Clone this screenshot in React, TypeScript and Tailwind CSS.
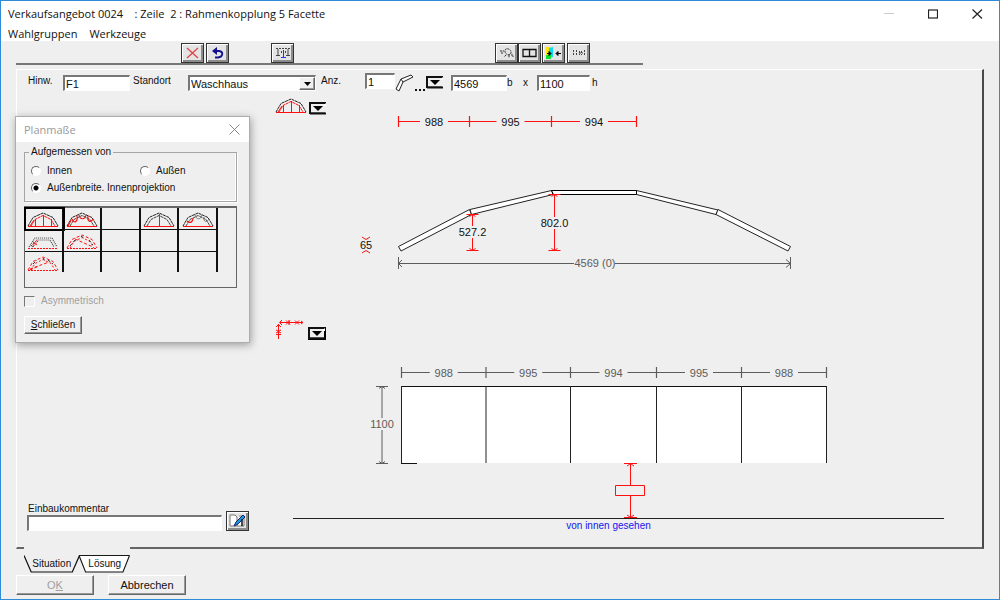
import type { ReactNode } from "react";
import { useState } from "react";

const RED = "#ff1010";
const GREY = "#5c5c5c";

function ToolButton({ label, className = "", children }: { label: string; className?: string; children: ReactNode }) {
  return (
    <button
      type="button"
      aria-label={label}
      className={`flex h-5 w-[23px] shrink-0 items-center justify-center border border-[#333] bg-[#e4e4e4] shadow-[inset_1px_1px_0_#fff,inset_-2px_-2px_0_#8c8c8c] ${className}`}
    >
      {children}
    </button>
  );
}

function MenuArrow({ label, framed = false, className = "" }: { label: string; framed?: boolean; className?: string }) {
  return (
    <button type="button" aria-label={label} className={`block shrink-0 ${className}`}>
      <svg width="18" height="13" viewBox="0 0 18 13" className="block">
        <rect x="0" y="0" width="18" height="13" fill={framed ? "#000" : "#efefef"} />
        <path d="M1 12V1H17" fill="none" stroke="#111" strokeWidth="2" />
        <rect x="2" y="2" width="14" height="8" fill="#efefef" />
        <path d="M2 10.500H16" stroke="#888" />
        <path d="M1 11.500H17" stroke="#111" strokeWidth="2" />
        <path d="M14 4L17 1V4Z" fill="#fff" />
        <path d="M4 4H14L9 9Z" fill="#000" />
      </svg>
    </button>
  );
}

type ArchKind = "bars" | "angles" | "middle" | "corner" | "flat" | "dotted" | "dottedLeft";

function Arch({ kind }: { kind: ArchKind }) {
  const dotted = kind === "dotted" || kind === "dottedLeft";
  if (kind === "flat") {
    return (
      <svg width="32" height="17" viewBox="0 0 32 17" className="block" fill="none">
        <path d="M2 13L8 4H25L30 13M5 13L10 6H23L27 13" stroke="#444" strokeDasharray="1 1" strokeWidth="1.200" />
        <path d="M1 14.500H31" stroke={RED} strokeDasharray="2 1" />
        <path d="M4 12L10 6M6 13L11 7M6 8L10 11" stroke={RED} strokeDasharray="2 1" />
      </svg>
    );
  }
  return (
    <svg width="32" height="17" viewBox="0 0 32 17" className="block" fill="none">
      <path
        d="M1 14L6 5.500L16 1L26 5.500L31 14"
        stroke={dotted ? RED : "#222"}
        strokeDasharray={dotted ? "3 2" : "3 0.6"}
      />
      <path
        d="M4 14L8 7.500L16 3.500L24 7.500L28 14"
        stroke={kind === "bars" ? RED : dotted ? RED : "#444"}
        strokeDasharray={dotted ? "2 2" : "3 0.6"}
      />
      <path d="M1 14.500H31" stroke={RED} strokeDasharray={dotted ? "2 1" : undefined} />
      {kind === "bars" && <path d="M8.500 14V7M16.500 14V3M24.500 14V7M3 14L7 8" stroke={RED} />}
      {kind === "middle" && <path d="M16.500 14V2" stroke={RED} />}
      {kind === "angles" && <path d="M6 7C8 12 12 10 11 4M13 3C14 8 19 8 20 3M22 4C21 10 25 11 27 7M2 14L5 8" stroke={RED} strokeWidth="1.200" />}
      {kind === "corner" && (
        <>
          <path d="M5 9C8 12 11 10 11 6" stroke={RED} strokeWidth="1.200" />
          <path d="M13 3C14 8 19 8 20 3M22 5C21 10 25 11 27 7" stroke="#777" />
        </>
      )}
      {kind === "dotted" && (
        <>
          <path d="M9 5L27 13" stroke={RED} strokeDasharray="3 2" />
          <path d="M4 12L9 6M15 2L19 5M23 6L27 11" stroke="#333" strokeDasharray="3 2" />
        </>
      )}
      {kind === "dottedLeft" && (
        <>
          <path d="M3 13L22 6M3 14L12 10" stroke={RED} strokeDasharray="3 2" />
          <path d="M6 8L10 4M16 2L18 5M21 4L26 8" stroke="#333" strokeDasharray="3 2" />
        </>
      )}
    </svg>
  );
}

function Chain({ xs, y, labels, color, textColor }: { xs: number[]; y: number; labels: string[]; color: string; textColor: string }) {
  return (
    <g>
      {xs.map((x) => (
        <path key={x} d={`M${x} ${y - 5.5}V${y + 5.5}`} stroke={color} strokeWidth="1.200" />
      ))}
      {labels.map((label, i) => {
        const mid = (xs[i] + xs[i + 1]) / 2;
        return (
          <g key={i}>
            <path d={`M${xs[i]} ${y}H${mid - 14}M${mid + 14} ${y}H${xs[i + 1]}`} stroke={color} />
            <text x={mid} y={y + 4} textAnchor="middle" fill={textColor}>
              {label}
            </text>
          </g>
        );
      })}
    </g>
  );
}

function Rise({ x, top, bottom, label, textY, color, textColor }: { x: number; top: number; bottom: number; label: string; textY: number; color: string; textColor: string }) {
  return (
    <g>
      <path
        d={`M${x} ${top}V${textY - 10}M${x} ${textY + 2}V${bottom}M${x - 6} ${top}H${x + 6}M${x - 6} ${bottom}H${x + 6}M${x - 3} ${top + 2}L${x} ${top}L${x + 3} ${top + 2}M${x - 3} ${bottom - 2}L${x} ${bottom}L${x + 3} ${bottom - 2}`}
        stroke={color}
        fill="none"
      />
      <text x={x} y={textY} textAnchor="middle" fill={textColor}>
        {label}
      </text>
    </g>
  );
}

function PlanView() {
  return (
    <svg viewBox="342 94 640 200" className="block h-auto min-w-0 flex-1 text-[11px]" role="img" aria-label="Grundriss">
      <Chain xs={[398.5, 469.5, 551.5, 636.5]} y={121.5} labels={["988", "995", "994"]} color={RED} textColor="#111" />
      <g fill="#fff" stroke="#222" strokeWidth="1">
        <path d="M398.500 246.500L469.500 209.500L471.500 214.500L401 251Z" />
        <path d="M470 209.500L551.500 190.500L553 194.500L471.500 214.500Z" />
        <path d="M636.500 190.500L718 210L716 214.500L636.500 194.500Z" />
        <path d="M718 209.500L790.500 246.500L788 251L716 214.500Z" />
        <path d="M551.500 190.500H636.500V194.500H553.500Z" stroke="#000" />
      </g>
      <Rise x={472.5} top={214.5} bottom={250.5} label="527.2" textY={236} color={RED} textColor="#111" />
      <Rise x={554.5} top={194.5} bottom={250.5} label="802.0" textY={227} color={RED} textColor="#111" />
      <path d="M362 237L366 239.500L370 237M362 253L366 250.500L370 253" stroke={RED} fill="none" />
      <text x="366" y="249" textAnchor="middle" fill="#111">
        65
      </text>
      <path
        d="M398.500 257V269M790.500 257V269M398.500 263.500H574M615 263.500H790.500M402 260L398.500 263.500L402 267M786 259.500L790.500 263.500L786 267.500"
        stroke={GREY}
        fill="none"
      />
      <text x="595" y="267" textAnchor="middle" fill={GREY}>
        4569 (0)
      </text>
    </svg>
  );
}

function ElevationView() {
  const xs = [401.5, 486, 570.5, 656.5, 741.5, 826.5];
  return (
    <svg viewBox="342 314 640 204" className="block h-auto min-w-0 flex-1 text-[11px]" role="img" aria-label="Ansicht">
      <Chain xs={xs} y={372.5} labels={["988", "995", "994", "995", "988"]} color={GREY} textColor={GREY} />
      <rect x="401" y="386" width="426" height="77" fill="#fff" />
      <path d="M401 386.500H827M401 463.500H417" stroke="#111" />
      {xs.map((x) => (
        <path key={x} d={`M${x} 386V463`} stroke="#222" />
      ))}
      <Rise x={382} top={386.5} bottom={463.5} label="1100" textY={428} color={GREY} textColor={GREY} />
      <path
        d="M624 463.500H637M630.500 463V485M627 466L630.500 463.500L634 466M630.500 496V518M624 517.500H637M627 515L630.500 517.500L634 515M615.500 485.500H644.500V495.500H615.500Z"
        stroke={RED}
        fill="none"
      />
    </svg>
  );
}

const fieldClass =
  "h-4 border-t-2 border-l-2 border-t-[#777] border-l-[#777] border-r border-b border-r-white border-b-white bg-white pl-px text-[11px] leading-3 text-[#111] outline-none";
const raisedClass =
  "border border-t-white border-l-white border-r-[#666] border-b-[#666] bg-[#efefef] shadow-[inset_-1px_-1px_0_#999]";

const cells: (ArchKind | null)[] = [
  "bars", "angles", null, "middle", "corner",
  "flat", "dotted", null, null, null,
  "dottedLeft", null, null, null, null,
];

function RadioOption({ label, checked, onSelect, className = "" }: { label: string; checked: boolean; onSelect: () => void; className?: string }) {
  return (
    <label className={`flex items-center gap-1.5 ${className}`}>
      <input
        type="radio"
        name="aufmass"
        checked={checked}
        onChange={onSelect}
        className="size-2.5 appearance-none rounded-full border border-t-[#666] border-l-[#666] border-r-white border-b-white bg-white checked:bg-[radial-gradient(circle,#000_2px,#fff_3px)]"
      />
      {label}
    </label>
  );
}

function PlanDialog() {
  const [mode, setMode] = useState("breite");
  const [selected, setSelected] = useState(0);
  return (
    <section
      role="dialog"
      aria-labelledby="plan-title"
      className="absolute top-[115px] left-[14px] w-[235px] border border-[#adadad] bg-[#efefef] shadow-[1px_2px_8px_rgba(0,0,0,0.35)]"
    >
      <header className="flex h-[25px] items-center justify-between bg-white pr-[9px] pl-2">
        <h2 id="plan-title" className="font-['Open_Sans','Noto_Sans',sans-serif] text-[11px] text-[#999]">
          Planmaße
        </h2>
        <button type="button" aria-label="Dialog schließen">
          <svg width="11" height="11" viewBox="0 0 11 11" className="block">
            <path d="M0.500 0.500L10.500 10.500M10.500 0.500L0.500 10.500" stroke="#888" />
          </svg>
        </button>
      </header>
      <div className="px-2 pt-1 pb-2">
        <div className="pr-1">
          <fieldset className="h-14 border border-[#a5a5a5] px-1.5 shadow-[inset_-1px_-1px_0_#fff,1px_1px_0_#fff]">
            <legend className="-ml-0.5 px-0.5 leading-3">Aufgemessen von</legend>
            <div className="flex pt-1.5">
              <RadioOption label="Innen" checked={mode === "innen"} onSelect={() => setMode("innen")} className="w-[109px]" />
              <RadioOption label="Außen" checked={mode === "aussen"} onSelect={() => setMode("aussen")} />
            </div>
            <RadioOption
              label="Außenbreite. Innenprojektion"
              checked={mode === "breite"}
              onSelect={() => setMode("breite")}
              className="mt-[3px]"
            />
          </fieldset>
          <div className="mt-1 h-[82px] border border-t-2 border-[#666]">
            <div className="grid w-[193px] grid-cols-5">
              {cells.map((kind, i) => (
                <button
                  key={i}
                  type="button"
                  aria-label={`Form ${i + 1}`}
                  aria-pressed={selected === i}
                  onClick={() => setSelected(i)}
                  className={`flex items-center justify-center border-r-2 border-[#111] ${i < 10 ? "h-[22px] border-b pt-1" : "h-5 pt-1"} ${selected === i ? "outline-2 -outline-offset-1 outline-black" : ""}`}
                >
                  {kind && <Arch kind={kind} />}
                </button>
              ))}
            </div>
          </div>
        </div>
        <label className="mt-1.5 flex items-center gap-1.5 text-[#a0a0a0]">
          <input
            type="checkbox"
            disabled
            className="size-[11px] appearance-none border border-t-[#777] border-l-[#777] border-r-white border-b-white bg-[#efefef]"
          />
          Asymmetrisch
        </label>
        <button type="button" className={`mt-2 h-[18px] w-[58px] ${raisedClass}`}>
          <span className="underline">S</span>chließen
        </button>
      </div>
    </section>
  );
}

function Tab({ label, active, onSelect, className }: { label: string; active: boolean; onSelect: () => void; className: string }) {
  return (
    <button type="button" role="tab" aria-selected={active} onClick={onSelect} className={`relative h-[18px] ${className}`}>
      <svg viewBox="0 0 54 18" preserveAspectRatio="none" className="absolute inset-0 h-full w-full">
        <path
          d="M0 0.500L7 17H47L54 0.500"
          fill={active ? "#fff" : "#efefef"}
          stroke="#111"
          strokeWidth="1.200"
        />
        {active && <path d="M0 0.500H54" stroke="#111" />}
      </svg>
      <span className="relative">{label}</span>
    </button>
  );
}

export default function App() {
  const [tab, setTab] = useState("loesung");
  return (
    <main className="relative flex min-h-screen flex-col border border-[#2f8ad8] bg-[#efefef] font-['Liberation_Sans',Arial,sans-serif] text-[10px] leading-[14px] text-[#111]">
      <header className="bg-white font-['Open_Sans','Noto_Sans',sans-serif] text-[11px]">
        <div className="flex h-[25px] items-center justify-between pr-4 pl-[7px]">
          <h1 className="whitespace-pre">{"Verkaufsangebot 0024    : Zeile  2 : Rahmenkopplung 5 Facette"}</h1>
          <div className="flex items-center gap-[34px]">
            <button type="button" aria-label="Minimieren">
              <svg width="10" height="11" viewBox="0 0 10 11" className="block">
                <path d="M0 5.500H10" stroke="#ccc" />
              </svg>
            </button>
            <button type="button" aria-label="Maximieren">
              <svg width="10" height="10" viewBox="0 0 10 10" className="block">
                <rect x="0.500" y="1" width="9" height="8" fill="none" stroke="#222" strokeWidth="1.200" />
              </svg>
            </button>
            <button type="button" aria-label="Fenster schließen">
              <svg width="11" height="10" viewBox="0 0 11 10" className="block">
                <path d="M0.500 0.500L10 9.500M10 0.500L0.500 9.500" stroke="#222" strokeWidth="1.200" />
              </svg>
            </button>
          </div>
        </div>
        <nav className="flex h-[15px] gap-3 pl-[7px]">
          <button type="button">Wahlgruppen</button>
          <button type="button">Werkzeuge</button>
        </nav>
      </header>

      <div className="ml-[15px] flex w-[627px] border-b-2 border-[#777] pt-0.5 pl-[165px]">
        <ToolButton label="Löschen">
          <svg width="13" height="12" viewBox="0 0 13 12">
            <path d="M1 1L12 11M12 1L1 11" stroke="#e04545" strokeWidth="1.300" />
          </svg>
        </ToolButton>
        <ToolButton label="Rückgängig" className="ml-0.5">
          <svg width="13" height="13" viewBox="0 0 13 13">
            <path d="M3 4H8C13 5 12 10 7 10.500H4" fill="none" stroke="#101090" strokeWidth="1.800" />
            <path d="M6 0L1 4L6 8Z" fill="#101090" />
          </svg>
        </ToolButton>
        <ToolButton label="Maße" className="ml-[42px]">
          <svg width="16" height="12" viewBox="0 0 16 12" fill="none">
            <path d="M1 1.500H15" stroke="#444" strokeDasharray="2 1" />
            <path d="M3 2V8M1 8.500H5M13 2V8M11 8.500H15" stroke="#444" />
            <path d="M8.500 3V11M6.500 4V6M10.500 4V6M6 10.500H11" stroke="#3030ee" />
          </svg>
        </ToolButton>
        <ToolButton label="Profil" className="ml-[201px]">
          <svg width="15" height="12" viewBox="0 0 15 12" fill="none" stroke="#333">
            <path d="M1 4H5M2 6H4M6 3C8 0 13 3 12 6S7 8 6 5ZM7 8L5 10M10 8V11M12 8H14V10" strokeDasharray="2 0.7" />
          </svg>
        </ToolButton>
        <ToolButton label="Rahmen">
          <svg width="15" height="10" viewBox="0 0 15 10" fill="none" stroke="#111" strokeWidth="1.300">
            <path d="M1 1.500H14V8.500H1ZM7.500 1V9" />
          </svg>
        </ToolButton>
        <ToolButton label="Kopplung" className="ml-px">
          <svg width="18" height="15" viewBox="0 0 18 15">
            <path d="M1 1H5V12H1Z" fill="#ffe600" />
            <path d="M4 2L8 1V11L4 12Z" fill="#10d8ee" />
            <path d="M1 9H6V13H1Z" fill="#10e030" />
            <path d="M2 7.500H5M4 5.500L6 7.500L4 9.500ZM13 7.500H16M13 5.500L11 7.500L13 9.500Z" fill="#000" stroke="#000" />
          </svg>
        </ToolButton>
        <ToolButton label="Abstand" className="ml-0.5">
          <svg width="14" height="8" viewBox="0 0 14 8" fill="none" stroke="#444">
            <path d="M1.500 1V7M4.500 1V7M7.500 2V6M9.500 2V6M12.500 1V7M7 4H11" strokeDasharray="2 1" />
          </svg>
        </ToolButton>
      </div>

      <section className="mt-1 mr-[15px] ml-[15px] border-t border-r-2 border-b-2 border-l border-t-white border-l-white border-r-[#4a4a4a] border-b-[#666]">
        <form className="flex h-6 pl-[11px]" onSubmit={(e) => e.preventDefault()}>
          <label htmlFor="hinw" className="w-[35px] pt-1">Hinw.</label>
          <input id="hinw" defaultValue="F1" className={`mt-[5px] w-[67px] ${fieldClass}`} />
          <label htmlFor="standort" className="w-[58px] pt-1 pl-[3px]">Standort</label>
          <div className="relative mt-[5px] w-32">
            <select id="standort" defaultValue="Waschhaus" className={`w-full appearance-none ${fieldClass}`}>
              <option>Waschhaus</option>
            </select>
            <span className={`pointer-events-none absolute top-0.5 right-px flex h-[13px] w-4 items-center justify-center ${raisedClass}`}>
              <svg width="7" height="4" viewBox="0 0 7 4">
                <path d="M0 0H7L3.500 4Z" fill="#000" />
              </svg>
            </span>
          </div>
          <label htmlFor="anz" className="w-[49px] pt-1 pl-[5px]">Anz.</label>
          <input id="anz" defaultValue="1" className={`mt-[3px] w-[30px] ${fieldClass}`} />
          <svg width="31" height="18" viewBox="0 0 31 18" className="mt-1 shrink-0" fill="none">
            <path d="M1 15L6 5L16 1L18 3L8 8L4 17Z" fill="#fff" stroke="#222" />
            <path d="M6 5L8 8" stroke="#222" />
            <path d="M20 16H22M24 16H26M28 16H30" stroke="#111" strokeWidth="2" />
          </svg>
          <MenuArrow label="Facettenform wählen" className="mt-1.5 self-start" />
          <input aria-label="Breite" defaultValue="4569" className={`mt-[5px] ml-[7px] w-14 ${fieldClass}`} />
          <span className="w-4 pt-1.5">b</span>
          <span className="w-3.5 pt-1.5">x</span>
          <input aria-label="Höhe" defaultValue="1100" className={`mt-[5px] w-[53px] ${fieldClass}`} />
          <span className="pt-1.5 pl-0.5">h</span>
        </form>

        <div className="flex">
          <div className="flex w-[245px] shrink-0 items-end pb-4 pl-2.5">
            <div className="flex w-[195px] flex-col">
              <label htmlFor="kommentar" className="pl-px leading-3">Einbaukommentar</label>
              <input id="kommentar" className={fieldClass} />
            </div>
            <ToolButton label="Kommentar bearbeiten" className="ml-1">
              <svg width="17" height="14" viewBox="0 0 17 14">
                <path d="M1 1H6L8 3V12H1ZM10 2H15V12H8" fill="#fff" stroke="#777" />
                <path d="M5 12L7 8L14 1L16 3L9 10Z" fill="#1898d8" stroke="#102070" />
                <path d="M13 5V12" stroke="#111" strokeWidth="1.500" />
              </svg>
            </ToolButton>
          </div>

          <div className="flex min-w-0 flex-1 flex-col">
            <div className="flex">
              <div className="flex w-20 shrink-0 items-start gap-0.5 pt-1 pl-[13px]">
                <Arch kind="bars" />
                <MenuArrow label="Grundriss wählen" className="mt-1" />
              </div>
              <PlanView />
            </div>
            <div className="mt-5 flex">
              <div className="flex w-20 shrink-0 items-start gap-0.5 pt-[5px] pl-[13px]">
                <svg width="31" height="22" viewBox="0 0 31 22" fill="none" stroke={RED}>
                  <path d="M5 3.500H28M7 1L4.500 3.500L7 6M11 1.500L15 5.500M15 1.500L11 5.500M14 1V6M20 1.500L24 5.500M24 1.500L20 5.500M26 2L28 3.500L26 5M3.500 5V20M1 8L3.500 5.500L6 8M1 11L6 14M6 11L1 14M1 15.500H6" />
                </svg>
                <MenuArrow label="Ansicht wählen" framed className="mt-2" />
              </div>
              <ElevationView />
            </div>
            <div className="mr-[38px] ml-[31px] border-t border-[#222] pr-5 pb-[15px] text-center leading-[13px] text-[#1515ee]">
              von innen gesehen
            </div>
          </div>
        </div>
      </section>

      <div role="tablist" className="relative -mt-0.5 ml-[23px] flex h-[26px] w-[106px] items-end bg-[#efefef]">
        <Tab label="Situation" active={tab === "situation"} onSelect={() => setTab("situation")} className="w-14" />
        <Tab label="Lösung" active={tab === "loesung"} onSelect={() => setTab("loesung")} className="w-[51px]" />
      </div>

      <footer className="mt-0.5 flex gap-3.5 pb-1 pl-[15px] text-[11px]">
        <button type="button" disabled className={`h-5 w-[78px] text-[#a0a0a0] ${raisedClass}`}>
          O<span className="underline">K</span>
        </button>
        <button type="button" className={`h-5 w-[78px] ${raisedClass}`}>Abbrechen</button>
      </footer>

      <PlanDialog />
    </main>
  );
}
